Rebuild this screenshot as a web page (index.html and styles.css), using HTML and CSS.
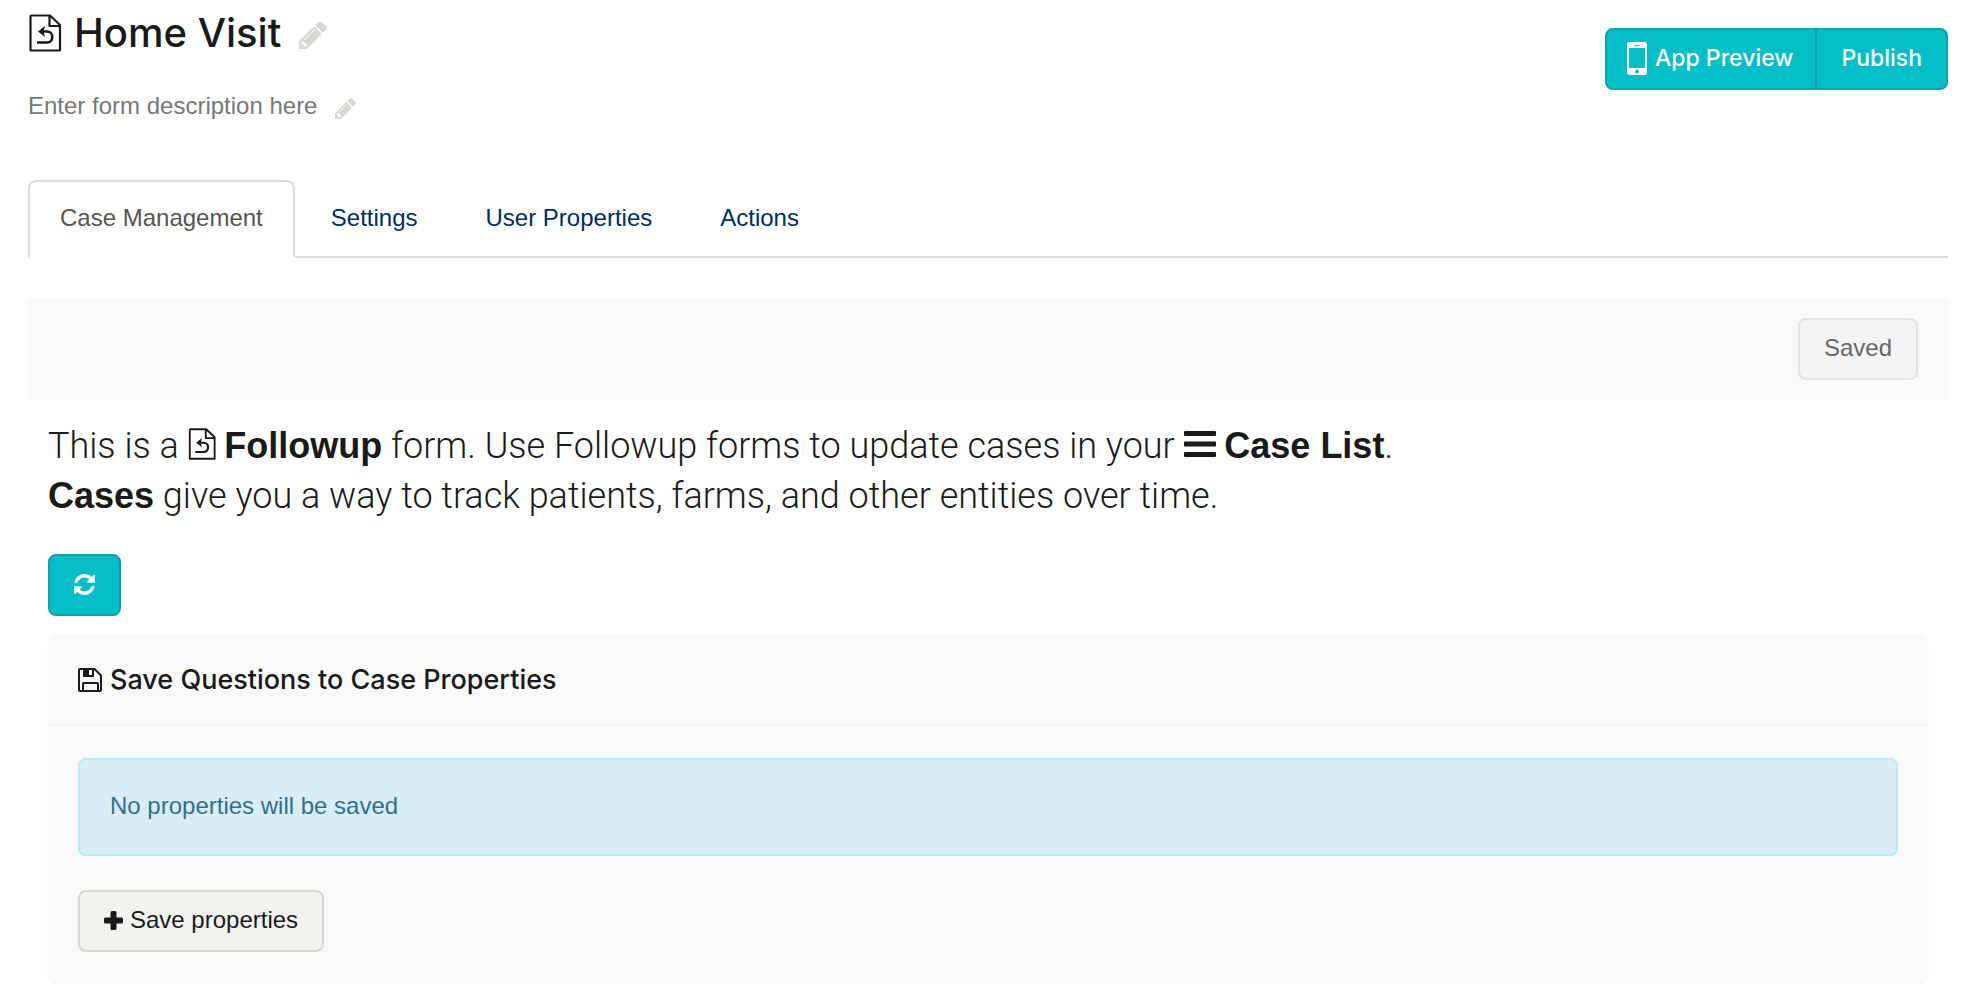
FILE: index.html
```html
<!DOCTYPE html>
<html lang="en">
    <head>
        <meta charset="utf-8">
        <title>Home Visit</title>
        <link rel="stylesheet" href="styles.css">
    </head>
    <body>
        <svg class="sprite" aria-hidden="true">
            <symbol id="icon-followup" viewBox="0 0 32 38">
                <path d="M2.500 1.500H21L31 11V36.500H1.500V2.500Q1.500 1.500 2.500 1.500ZM20.500 1.500V12H31" fill="none" stroke="currentColor" stroke-width="2.200" stroke-linejoin="round" />
                <path d="M8 28.500H18C25 28.500 25 17.500 18 17.500H13" fill="none" stroke="currentColor" stroke-width="2.600" />
                <path d="M9 17.500L16 12L14.500 17.500L16 23Z" fill="currentColor" />
            </symbol>
            <symbol id="icon-pencil" viewBox="128 128 1536 1536">
                <path d="M491 1536l91-91-235-235-91 91v107h128v128h107zm523-928q0-22-22-22-10 0-17 7l-542 542q-7 7-7 17 0 22 22 22 10 0 17-7l542-542q7-7 7-17zm-54-192l416 416-832 832H128v-416zm683 96q0 53-37 90l-166 166-416-416 166-165q36-38 90-38 53 0 91 38l235 234q37 39 37 91z" />
            </symbol>
            <symbol id="icon-mobile" viewBox="0 0 20 33">
                <path fill-rule="evenodd" d="M3 0H17Q20 0 20 3V30Q20 33 17 33H3Q0 33 0 30V3Q0 0 3 0ZM2 6V26H18V6ZM7.500 3V4H12.500V3ZM10 27.500A2 2 0 1 0 10 31.500A2 2 0 1 0 10 27.500Z" />
            </symbol>
            <symbol id="icon-bars" viewBox="0 0 32 27">
                <rect y="0" width="32" height="5" rx="1" />
                <rect y="10.500" width="32" height="5" rx="1" />
                <rect y="21" width="32" height="5" rx="1" />
            </symbol>
            <symbol id="icon-refresh" viewBox="0 0 1536 1536">
                <path d="M1511 928q0 5-1 7-64 268-268 434.500T764 1536q-146 0-282.500-55T238 1324l-129 129q-19 19-45 19t-45-19-19-45V960q0-26 19-45t45-19h448q26 0 45 19t19 45-19 45l-137 137q71 66 161 102t187 36q134 0 250-65t186-179q11-17 53-117 8-23 30-23h192q13 0 22.500 9.500t9.500 22.500zM1536 128v448q0 26-19 45t-45 19h-448q-26 0-45-19t-19-45 19-45l138-138Q969 256 768 256q-134 0-250 65T332 500q-11 17-53 117-8 23-30 23H50q-13 0-22.500-9.500T18 608v-7q65-268 270-434.500T768 0q146 0 284 55.500T1297 212l130-129q19-19 45-19t45 19 19 45z" />
            </symbol>
            <symbol id="icon-save" viewBox="0 0 24 24">
                <path d="M1 2Q1 1 2 1H16.500L23 7.500V22Q23 23 22 23H2Q1 23 1 22Z" fill="none" stroke="currentColor" stroke-width="2" />
                <path d="M5 1H16V9H5ZM11 2V7H14V2Z" fill-rule="evenodd" />
                <path d="M5 23V16Q5 15 6 15H19Q20 15 20 16V23" fill="none" stroke="currentColor" stroke-width="2" />
            </symbol>
            <symbol id="icon-plus" viewBox="0 0 19 19">
                <path d="M8 0H11Q12.500 0 12.500 1.500V6.500H17.500Q19 6.500 19 8V11Q19 12.500 17.500 12.500H12.500V17.500Q12.500 19 11 19H8Q6.500 19 6.500 17.500V12.500H1.500Q0 12.500 0 11V8Q0 6.500 1.500 6.500H6.500V1.500Q6.500 0 8 0Z" />
            </symbol>
        </svg>

        <header class="page-header">
            <div>
                <h1 class="form-name">
                    <svg class="icon icon-form"><use href="#icon-followup" /></svg>
                    <span>Home Visit</span>
                    <button type="button" class="edit" aria-label="Edit name"><svg class="icon icon-edit"><use href="#icon-pencil" /></svg></button>
                </h1>
                <div class="form-description">
                    <span>Enter form description here</span>
                    <button type="button" class="edit" aria-label="Edit description"><svg class="icon icon-edit-small"><use href="#icon-pencil" /></svg></button>
                </div>
            </div>
            <div class="btn-group">
                <button type="button" class="btn btn-primary"><svg class="icon icon-mobile"><use href="#icon-mobile" /></svg>App Preview</button>
                <button type="button" class="btn btn-primary">Publish</button>
            </div>
        </header>

        <nav class="tabs">
            <a class="tab active" href="#case-management">Case Management</a>
            <a class="tab" href="#settings">Settings</a>
            <a class="tab" href="#user-properties">User Properties</a>
            <a class="tab" href="#actions">Actions</a>
        </nav>

        <main>
            <div class="savebar">
                <button type="button" class="btn btn-default" disabled>Saved</button>
            </div>

            <div class="content" id="case-management">
                <p class="lead">
                    This is a <svg class="icon icon-lead-form"><use href="#icon-followup" /></svg> <b>Followup</b> form.
                    Use Followup forms to update cases in your <svg class="icon icon-bars"><use href="#icon-bars" /></svg> <b>Case List</b>.<br>
                    <b>Cases</b> give you a way to track patients, farms, and other entities over time.
                </p>

                <button type="button" class="btn btn-primary" aria-label="Refresh"><svg class="icon icon-refresh"><use href="#icon-refresh" /></svg></button>

                <section class="panel">
                    <h2 class="panel-heading"><svg class="icon icon-save"><use href="#icon-save" /></svg>Save Questions to Case Properties</h2>
                    <div class="panel-body">
                        <div class="alert">No properties will be saved</div>
                        <button type="button" class="btn btn-default"><svg class="icon icon-plus"><use href="#icon-plus" /></svg>Save properties</button>
                    </div>
                </section>
            </div>
        </main>
    </body>
</html>
```

FILE: styles.css
```css
* {
    box-sizing: border-box;
}

body {
    background: #fff;
    color: #1a1a1a;
    font-family: "Liberation Sans", Arial, sans-serif;
    font-size: 24px;
    line-height: 34px;
    margin: 0;
    padding: 0 21px 0 28px;
}

.sprite {
    display: none;
}

.icon {
    display: inline-block;
    fill: currentColor;
    flex: none;
}

.page-header {
    align-items: flex-start;
    display: flex;
    justify-content: space-between;
    padding-top: 8px;
}

.form-name {
    align-items: center;
    display: flex;
    font-family: Inter, sans-serif;
    font-size: 40px;
    font-weight: 500;
    line-height: 50px;
    margin: 0;
}

.icon-form {
    height: 38px;
    margin-right: 12px;
    width: 34px;
}

.edit {
    background: none;
    border: 0;
    color: #d6d6d4;
    cursor: pointer;
    display: flex;
    margin-left: 18px;
    padding: 4px 0 0;
}

.icon-edit {
    height: 28px;
    width: 28px;
}

.icon-edit-small {
    height: 21px;
    width: 21px;
}

.form-description {
    align-items: center;
    color: #777;
    display: flex;
    margin-top: 31px;
}

.btn {
    align-items: center;
    border: 2px solid;
    border-radius: 8px;
    cursor: pointer;
    display: flex;
    font: inherit;
    height: 62px;
    padding: 0 24px 2px;
}

.btn-primary {
    background: #04bec7;
    border-color: #03a5ad;
    color: #fff;
}

.btn-default {
    background: #f2f2f1;
    border-color: #d6d6d4;
    color: #1a1a1a;
}

.btn-default:disabled {
    background: #f4f4f4;
    border-color: #e2e2e1;
    color: #666;
    cursor: default;
}

.btn-group {
    display: flex;
    font-family: Inter, sans-serif;
    font-size: 23px;
    font-weight: 500;
    padding-top: 20px;
}

.btn-group .btn:first-child {
    border-bottom-right-radius: 0;
    border-top-right-radius: 0;
    padding-left: 20px;
    padding-right: 22px;
}

.btn-group .btn:last-child {
    border-bottom-left-radius: 0;
    border-left: 0;
    border-top-left-radius: 0;
}

.icon-mobile {
    height: 33px;
    margin-right: 8px;
    width: 20px;
}

.tabs {
    border-bottom: 2px solid #ddd;
    display: flex;
    gap: 4px;
    margin-top: 57px;
}

.tab {
    border: 2px solid transparent;
    border-radius: 8px 8px 0 0;
    color: #002c5f;
    margin-bottom: -2px;
    padding: 19px 30px 21px;
    text-decoration: none;
}

.tab.active {
    background: #fff;
    border-color: #ddd;
    border-bottom-color: #fff;
    color: #555;
}

.savebar {
    background: #f9f9f9;
    display: flex;
    justify-content: flex-end;
    margin-top: 40px;
    padding: 20px 30px;
}

.content {
    padding: 21px 20px 0;
}

.lead {
    font-family: Roboto, sans-serif;
    font-size: 36px;
    font-weight: 300;
    line-height: 50px;
    margin: 0 0 33px;
}

.lead b {
    font-family: "Liberation Sans", Arial, sans-serif;
    font-weight: 700;
}

.icon-lead-form {
    height: 32px;
    vertical-align: -2px;
    width: 28px;
}

.icon-bars {
    height: 27px;
    width: 32px;
}

.icon-refresh {
    height: 21px;
    width: 21px;
}

.panel {
    background: #f9f9f9;
    border-radius: 10px;
    box-shadow: 0 1px 2px rgba(0, 0, 0, .05);
    margin-top: 18px;
}

.panel-heading {
    align-items: center;
    border-bottom: 2px solid #f2f2f1;
    display: flex;
    font-family: Inter, sans-serif;
    font-size: 27px;
    font-weight: 500;
    line-height: 40px;
    margin: 0;
    padding: 26px 30px 24px;
}

.icon-save {
    height: 24px;
    margin-right: 8px;
    width: 24px;
}

.panel-body {
    padding: 32px 30px;
}

.alert {
    background: #d9edf7;
    border: 2px solid #bce8f1;
    border-radius: 8px;
    color: #31708f;
    margin-bottom: 34px;
    padding: 29px 30px 31px;
}

.icon-plus {
    height: 19px;
    margin-right: 7px;
    width: 19px;
}
```
